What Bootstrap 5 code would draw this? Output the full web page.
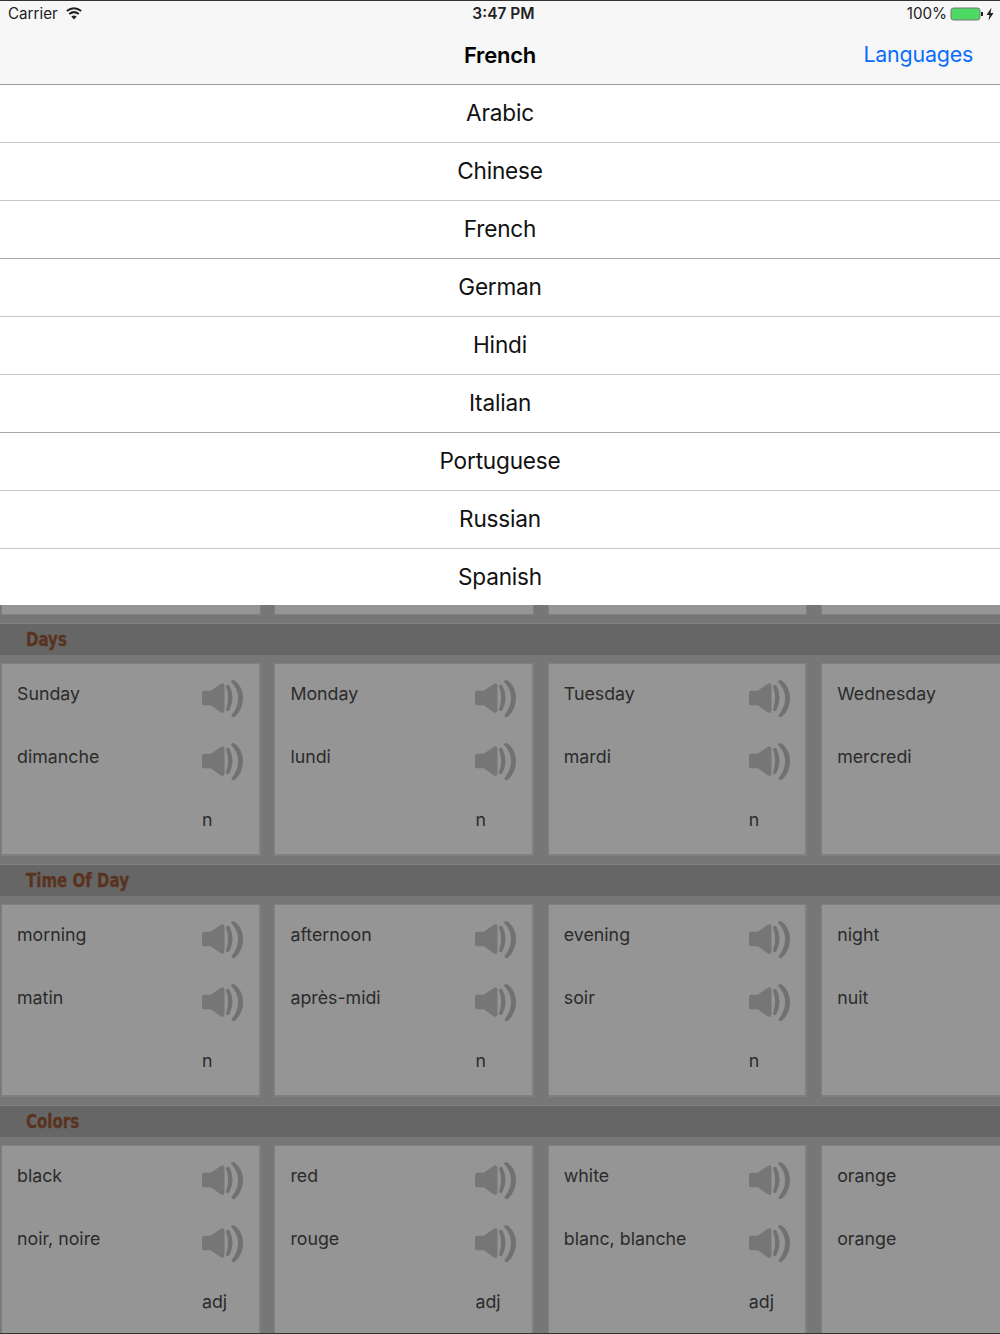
<!DOCTYPE html>
<html lang="en">
<head>
  <meta charset="UTF-8">
  <title>French</title>
  <link href="https://cdn.jsdelivr.net/npm/bootstrap@5.3.0/dist/css/bootstrap.min.css" rel="stylesheet">
  <style>
    html, body {
      height: 1334px;
      overflow: hidden;
    }
    body {
      font-family: Inter, "Noto Sans", "Liberation Sans", sans-serif;
      background-color: #777;
      color: #000;
    }
    /* dark edge of the device along the bottom */
    body::after {
      content: "";
      position: fixed;
      left: 0;
      right: 0;
      bottom: 0;
      height: 1px;
      background-color: #333;
    }
    .top-bar {
      height: 85px;
      background-color: #f7f7f7;
      border-top: 1px solid #333;
      border-bottom: 1px solid #999;
    }
    .status-row {
      height: 26px;
      padding: 0 5px 0 8px;
      font-size: 15.2px;
      color: #222;
    }
    .status-time {
      font-size: 15.5px;
      font-weight: 600;
      left: 7px;
      right: 0;
      text-align: center;
    }
    .status-right {
      gap: 3px;
    }
    .title-row {
      height: 56px;
      padding-right: 27px;
    }
    .nav-title {
      left: 0;
      right: 0;
      text-align: center;
      font-size: 22px;
      font-weight: 600;
      letter-spacing: -0.2px;
    }
    .nav-back {
      font-size: 21.4px;
      color: #0a6cff;
      text-decoration: none;
      letter-spacing: -0.2px;
      padding-bottom: 2px;
    }
    .lang-item {
      height: 58px;
      border-radius: 0;
      border-width: 0 0 1px 0;
      border-color: #c8c8c8;
      padding: 0 0 1px 0;
      font-size: 22.6px;
      letter-spacing: -0.2px;
      color: #111;
    }
    .lang-item.dark-line {
      border-color: #a8a8a8;
    }
    .lang-item:last-child {
      height: 56px;
      border-bottom: 0;
    }
    .sliver-row {
      height: 10px;
      margin-bottom: 9px;
    }
    .word-grid {
      display: grid;
      grid-template-columns: repeat(4, 259.5px);
      column-gap: 13.9px;
      padding-left: 1px;
    }
    .sliver-cell {
      height: 10px;
      background-color: #959595;
      border: 1px solid #808080;
      border-top: 0;
    }
    .group-head {
      height: 31px;
      padding-left: 26px;
      background-color: #666;
      box-shadow: 0 -1px 0 #828282;
      font-family: "DejaVu Sans Condensed", "Liberation Sans", sans-serif;
      font-weight: 700;
      font-size: 19px;
      color: #5a3320;
    }
    .group-title {
      display: inline-block;
      transform: scaleX(0.88);
      transform-origin: left center;
      -webkit-text-stroke: 0.3px #5a3320;
      white-space: nowrap;
    }
    .word-section {
      height: 241px;
    }
    .section-body {
      padding-top: 8px;
    }
    .word-cell {
      height: 193px;
      background-color: #959595;
      border: 2px solid #808080;
      border-width: 1px 2px 2px 1px;
      display: grid;
      grid-template-columns: 199px 1fr;
      grid-template-rows: 61px 64px 63px;
      font-size: 17.8px;
      color: #2b2b2b;
    }
    .word-text {
      padding-left: 15px;
      display: flex;
      align-items: center;
      white-space: nowrap;
    }
    .speaker-slot {
      display: flex;
      align-items: center;
      padding-top: 8px;
      padding-left: 1px;
    }
    .pos-text {
      grid-column: 2;
      grid-row: 3;
      display: flex;
      align-items: center;
      padding-left: 1px;
    }
  </style>
</head>
<body>
  <svg width="0" height="0" class="d-block">
    <symbol id="speaker" viewBox="0 0 43 40">
      <path d="M0 14 Q0 12 2 12 L9 12 L19 5 Q23 3 23 7 L23 32 Q23 36 19 34 L9 27 L2 27 Q0 27 0 25 Z" fill="#767676"/>
      <path d="M24.5 7.5 Q26 5 28 6.5 Q34.5 19 28 32 Q26 34 24.5 31.5 Q29 19 24.5 7.5 Z" fill="#717171"/>
      <path d="M29.5 2.5 Q31 0 33.5 1.5 Q42 8 42 19.5 Q42 31 34 38.5 Q31.5 40.5 30 37.5 Q37 29 37 19.5 Q37 10 29.5 2.5 Z" fill="#717171"/>
    </symbol>
  </svg>

  <header class="top-bar">
    <div class="status-row d-flex align-items-center justify-content-between position-relative">
      <div class="d-flex align-items-center gap-2">
        <span>Carrier</span>
        <svg width="16" height="13" viewBox="0 0 16 13">
          <path d="M8 12.5 L5.3 9.4 Q8 7.4 10.7 9.4 Z" fill="#222"/>
          <path d="M3.2 7 Q8 3.2 12.8 7" fill="none" stroke="#222" stroke-width="2"/>
          <path d="M0.8 4 Q8 -1.6 15.2 4" fill="none" stroke="#222" stroke-width="2"/>
        </svg>
      </div>
      <div class="status-time position-absolute">3:47 PM</div>
      <div class="status-right d-flex align-items-center">
        <span>100%</span>
        <svg width="45" height="14" viewBox="0 0 45 14">
          <rect x="1" y="1" width="29" height="12" rx="2.5" fill="#4cd964" stroke="#777"/>
          <rect x="31" y="5" width="2" height="4" fill="#222"/>
          <path d="M41.5 0.5 L36.5 8 L39.5 8 L38.5 13.5 L43.5 6 L40.5 6 Z" fill="#222"/>
        </svg>
      </div>
    </div>
    <div class="title-row d-flex align-items-center justify-content-end position-relative">
      <div class="nav-title position-absolute">French</div>
      <a class="nav-back position-relative" href="#">Languages</a>
    </div>
  </header>

  <div class="list-group list-group-flush" id="langList"></div>

  <div class="word-grid sliver-row" id="sliverRow"></div>
  <main id="sections"></main>

  <script>
    const idiomas = ["Arabic", "Chinese", "French", "German", "Hindi", "Italian", "Portuguese", "Russian", "Spanish"];
    const linhasEscuras = ["French", "Italian"];

    const grupos = [
      { titulo: "Days", tipo: "n", palavras: [["Sunday", "dimanche"], ["Monday", "lundi"], ["Tuesday", "mardi"], ["Wednesday", "mercredi"]] },
      { titulo: "Time Of Day", tipo: "n", palavras: [["morning", "matin"], ["afternoon", "après-midi"], ["evening", "soir"], ["night", "nuit"]] },
      { titulo: "Colors", tipo: "adj", palavras: [["black", "noir, noire"], ["red", "rouge"], ["white", "blanc, blanche"], ["orange", "orange"]] }
    ];

    const alto = '<div class="speaker-slot"><svg width="42" height="39"><use href="#speaker"></use></svg></div>';

    document.getElementById("langList").innerHTML = idiomas.map(nome => {
      const classe = linhasEscuras.includes(nome) ? " dark-line" : "";
      return `<div class="list-group-item lang-item d-flex align-items-center justify-content-center${classe}">${nome}</div>`;
    }).join("");

    document.getElementById("sliverRow").innerHTML = '<div class="sliver-cell"></div>'.repeat(4);

    document.getElementById("sections").innerHTML = grupos.map(grupo => {
      // a quarta coluna sai da tela, os icones e o tipo dela nao aparecem
      const celulas = grupo.palavras.map((p, i) => i < 3 ? `
        <div class="word-cell">
          <div class="word-text">${p[0]}</div>${alto}
          <div class="word-text">${p[1]}</div>${alto}
          <div class="pos-text">${grupo.tipo}</div>
        </div>` : `
        <div class="word-cell">
          <div class="word-text">${p[0]}</div><div></div>
          <div class="word-text">${p[1]}</div>
        </div>`).join("");
      return `
        <section class="word-section">
          <div class="group-head d-flex align-items-center"><span class="group-title">${grupo.titulo}</span></div>
          <div class="section-body word-grid">${celulas}</div>
        </section>`;
    }).join("");
  </script>
  <script src="https://cdn.jsdelivr.net/npm/bootstrap@5.3.0/dist/js/bootstrap.bundle.min.js"></script>
</body>
</html>
